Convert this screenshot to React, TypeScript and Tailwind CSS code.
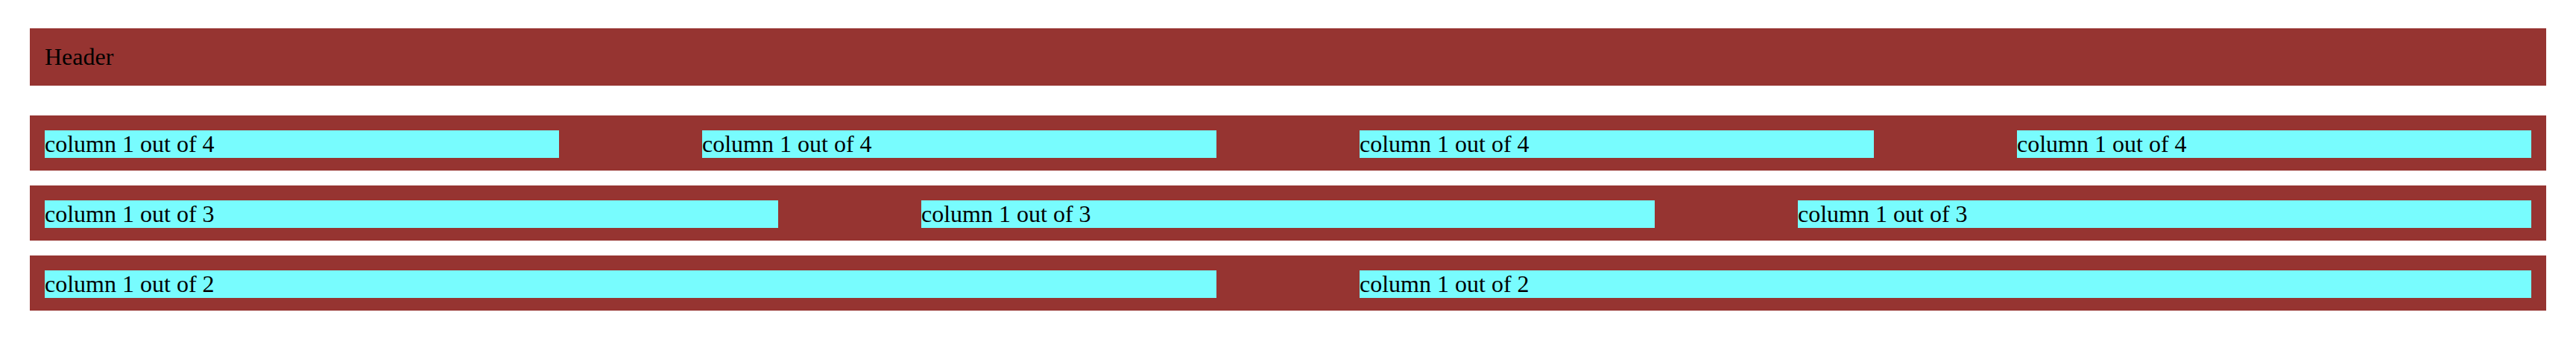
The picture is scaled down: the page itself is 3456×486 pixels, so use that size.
import React from 'react';

const rows = [4, 3, 2];

const Column: React.FC<{ total: number }> = ({ total }) => (
  <div className="flex-1 h-[37px] leading-[37px] bg-[#78fcfe] whitespace-nowrap">
    column 1 out of {total}
  </div>
);

const App: React.FC = () => {
  return (
    <div className="min-h-[486px] bg-white px-[40px] pt-[38px] text-[32px] text-black font-['Liberation_Serif','Times_New_Roman',serif]">
      <div className="bg-[#963431] px-[20px] pt-[20px] pb-[20px] h-[77px] leading-[37px]">Header</div>

      <div className="mt-[40px] flex flex-col gap-[20px]">
        {rows.map(n => (
          <div key={n} className="bg-[#963431] px-[20px] pt-[20px] pb-[17px] flex gap-[192px]">
            {Array.from({ length: n }).map((_, i) => (
              <Column key={i} total={n} />
            ))}
          </div>
        ))}
      </div>
    </div>
  );
};

export default App;
